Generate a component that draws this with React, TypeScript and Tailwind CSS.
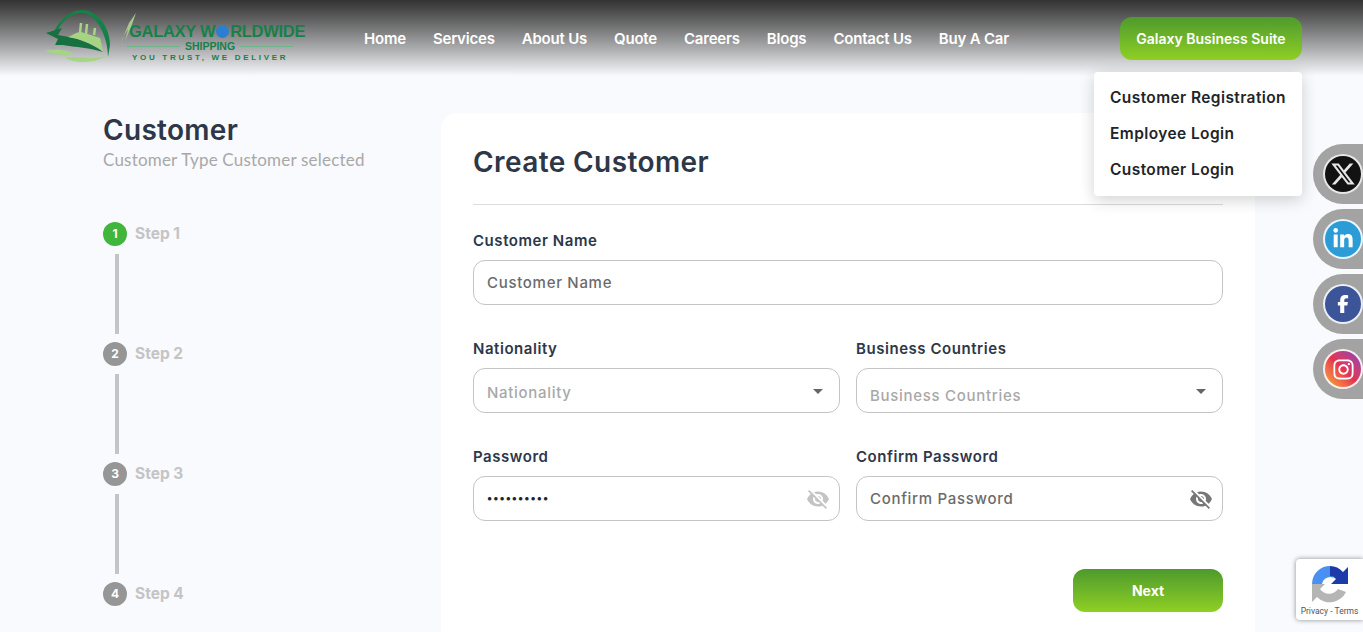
import { FaFacebookF, FaInstagram, FaLinkedinIn, FaXTwitter } from "react-icons/fa6";
import { MdArrowDropDown, MdVisibilityOff } from "react-icons/md";

const navLinks = ["Home", "Services", "About Us", "Quote", "Careers", "Blogs", "Contact Us", "Buy A Car"];
const menuItems = ["Customer Registration", "Employee Login", "Customer Login"];

const Logo = () => (
  <div className="flex items-start">
    <svg width="84" height="62" viewBox="0 0 84 62" className="mt-[7px] shrink-0">
      <path d="M8 27 C14 12 26 3 37 3 C52 3 65 20 65 38 L63 50 C63 30 52 7 37 6 C26 6 16 14 12 26 Z" fill="#178048" />
      <path d="M1 26 L17 21 L13 28 L30 31 C42 35 52 40 58 45 C46 41 30 40 18 38 L10 38 L13 32 Z" fill="#17703f" />
      <path d="M23 30 C28 28 32 25 36 25 L55 31 L58 44 C48 37 35 32 23 30 Z" fill="#a5d584" />
      <path d="M35 26 L36 16 M41 27 L42 17 M49 28 L50 21" stroke="#a5d584" strokeWidth="2.5" fill="none" />
      <path d="M0 44 C10 42 18 42 28 46 C22 50 12 48 0 44 Z M20 51 C30 48 42 53 62 49 C50 56 32 57 20 51 Z" fill="#a5d584" />
    </svg>
    <div className="relative mt-[22px] flex w-[176px] flex-col items-start font-['Liberation_Sans',sans-serif] font-bold text-[#17804a]">
      <svg width="20" height="34" viewBox="0 0 20 34" className="absolute -left-[11px] -top-[9px]">
        <path d="M18 0 L11 10 L6 22 L2 34 L5 24 L10 16 L7 28 L13 14 Z" fill="#a9c98c" />
      </svg>
      <div className="flex items-center whitespace-nowrap text-[16.5px] leading-[18px] tracking-[-0.3px]">
        <span>GALAXY W</span>
        <span className="mx-[1px] h-[13px] w-[13px] shrink-0 rounded-full bg-[#2b7fd0]" />
        <span>RLDWIDE</span>
      </div>
      <div className="-ml-[2px] flex w-[166px] items-center gap-[5px] text-[10.5px] leading-[13px]">
        <span className="h-px flex-1 bg-[#6fb58c]" />
        <span>SHIPPING</span>
        <span className="h-px flex-1 bg-[#6fb58c]" />
      </div>
      <div className="ml-[3px] whitespace-nowrap text-[8px] leading-[10px] tracking-[2.7px]">YOU TRUST, WE DELIVER</div>
    </div>
  </div>
);

const Header = () => (
  <header className="relative flex h-[76px] items-start bg-gradient-to-b from-[#333333] to-[#f9fafd] pl-[45px] pr-[61px]">
    <div className="w-[319px] shrink-0">
      <Logo />
    </div>
    <nav className="flex gap-[27px] pt-[30px] font-['Inter',sans-serif] text-[15px] font-semibold leading-[18px] text-white">
      {navLinks.map((link) => (
        <a key={link} className="whitespace-nowrap tracking-[-0.2px]">
          {link}
        </a>
      ))}
    </nav>
    <button className="ml-auto mt-[17px] h-[43px] w-[182px] rounded-xl bg-gradient-to-b from-[#4e9a2c] to-[#8fd022] font-['Inter',sans-serif] text-[14px] font-semibold text-white">
      Galaxy Business Suite
    </button>
    <div className="absolute right-[61px] top-[72px] z-20 flex h-[124px] w-[208px] flex-col justify-center gap-[12px] rounded bg-white pl-4 font-['Inter',sans-serif] text-[15.5px] font-semibold leading-6 tracking-[0.4px] text-[#212529] shadow-[0_4px_16px_rgba(0,0,0,0.18)]">
      {menuItems.map((item) => (
        <a key={item} className="whitespace-nowrap">
          {item}
        </a>
      ))}
    </div>
  </header>
);

const Steps = () => (
  <div className="mt-[49px] flex flex-col">
    {[1, 2, 3, 4].map((n) => (
      <div key={n} className="flex flex-col">
        <div className="flex items-center gap-2">
          <span
            className={`flex h-6 w-6 items-center justify-center rounded-full text-xs font-bold text-white ${
              n === 1 ? "bg-[#42b53c]" : "bg-[#969696]"
            }`}
          >
            {n}
          </span>
          <span className="text-[15.5px] font-bold leading-6 text-[#c4c4c4]">Step {n}</span>
        </div>
        {n < 4 && <div className="my-2 ml-[12px] h-20 w-1 bg-[#c4c4c4]" />}
      </div>
    ))}
  </div>
);

const Label = ({ text }: { text: string }) => (
  <label className="mb-[10px] block text-[15px] font-semibold leading-[19px] tracking-[0.55px] text-[#2d3748]">{text}</label>
);

const Field = ({ label, children }: { label: string; children: React.ReactNode }) => (
  <div className="min-w-0 flex-1">
    <Label text={label} />
    <div className="flex h-[45px] items-center justify-between rounded-xl border border-[#c4c4c4] bg-white pl-[13px] pr-[9px] text-[15px] font-medium tracking-[0.7px]">
      {children}
    </div>
  </div>
);

const socials = [
  { icon: <FaXTwitter className="h-[26px] w-[26px] text-[#e6e6e6]" />, bg: "bg-[#121212]" },
  { icon: <FaLinkedinIn className="h-[22px] w-[22px] text-white" />, bg: "bg-[#2c9cd6]" },
  { icon: <FaFacebookF className="h-[18px] w-[18px] text-white" />, bg: "bg-[#3b5598]" },
  {
    icon: <FaInstagram className="h-[23px] w-[23px] text-white" />,
    bg: "bg-gradient-to-tr from-[#f9a825] via-[#e5304f] to-[#8a3ab9]",
  },
];

export default function App() {
  return (
    <div className="relative h-screen overflow-hidden bg-[#f9fafd] font-['Inter',sans-serif]">
      <Header />
      <main className="flex items-start pl-[103px]">
        <aside className="w-[338px] shrink-0 pt-[37px]">
          <h2 className="text-[28px] font-semibold leading-[34px] tracking-[0.3px] text-[#2d3748]">Customer</h2>
          <p className="font-['Lato',sans-serif] text-[17px] leading-[26px] tracking-[0.2px] text-[#a8a8a8]">Customer Type Customer selected</p>
          <Steps />
        </aside>
        <section className="mt-[37px] h-[600px] w-[814px] rounded-t-2xl bg-white px-8 pt-[30px]">
          <h1 className="text-[28px] font-semibold leading-[38px] tracking-[0.4px] text-[#2d3748]">Create Customer</h1>
          <hr className="mb-[26px] mt-[23px] border-[#dcdcdc]" />
          <Field label="Customer Name">
            <span className="pt-[2px] text-[#6b6b6b]">Customer Name</span>
          </Field>
          <div className="mt-[34px] flex gap-4">
            <Field label="Nationality">
              <span className="pt-[5px] text-[#a8a8a8]">Nationality</span>
              <MdArrowDropDown className="h-6 w-6 text-[#666666]" />
            </Field>
            <Field label="Business Countries">
              <span className="pt-[12px] text-[#a8a8a8]">Business Countries</span>
              <MdArrowDropDown className="h-6 w-6 text-[#666666]" />
            </Field>
          </div>
          <div className="mt-[34px] flex gap-4">
            <Field label="Password">
              <span className="text-[11px] font-bold tracking-[1px] text-[#212529]">••••••••••</span>
              <MdVisibilityOff className="h-6 w-6 text-[#c4c4c4]" />
            </Field>
            <Field label="Confirm Password">
              <span className="pt-[2px] text-[#6b6b6b]">Confirm Password</span>
              <MdVisibilityOff className="h-6 w-6 text-[#777777]" />
            </Field>
          </div>
          <div className="mt-[48px] flex justify-end">
            <button className="h-[43px] w-[150px] rounded-xl bg-gradient-to-b from-[#4e9a2c] to-[#8fd022] text-[14px] font-bold text-white">
              Next
            </button>
          </div>
        </section>
      </main>

      <div className="absolute right-0 top-[144px] flex flex-col gap-[5px]">
        {socials.map((s, i) => (
          <div key={i} className="flex h-[60px] w-[50px] items-center rounded-l-[30px] bg-[#a3a3a3] pl-[10px]">
            <div className={`flex h-10 w-10 shrink-0 items-center justify-center rounded-full border-2 border-white/90 ${s.bg}`}>
              {s.icon}
            </div>
          </div>
        ))}
      </div>

      <div className="absolute right-0 top-[559px] flex h-[61px] w-[67px] flex-col items-center rounded-l-sm bg-white pt-[6px] shadow-[0_0_5px_rgba(0,0,0,0.45)]">
        <svg width="38" height="38" viewBox="0 0 38 38">
          <path d="M1 19 A18 18 0 0 1 19 1 L19 9 L24 14 A8 8 0 0 0 11 19 Z" fill="#4a90f2" />
          <path d="M19 1 A18 18 0 0 1 32 7 L37 2 L37 19 L20 19 L25 14 A8 8 0 0 0 19 11 Z" fill="#1c3aa9" />
          <path d="M1 19 L14 19 L9 24 A11 11 0 0 0 27 24 L35 27 A18 18 0 0 1 6 32 L1 37 Z" fill="#b5b5b5" />
        </svg>
        <span className="mt-[2px] whitespace-nowrap font-['Roboto',sans-serif] text-[8.5px] leading-[12px] text-[#555555]">
          Privacy - Terms
        </span>
      </div>
    </div>
  );
}
